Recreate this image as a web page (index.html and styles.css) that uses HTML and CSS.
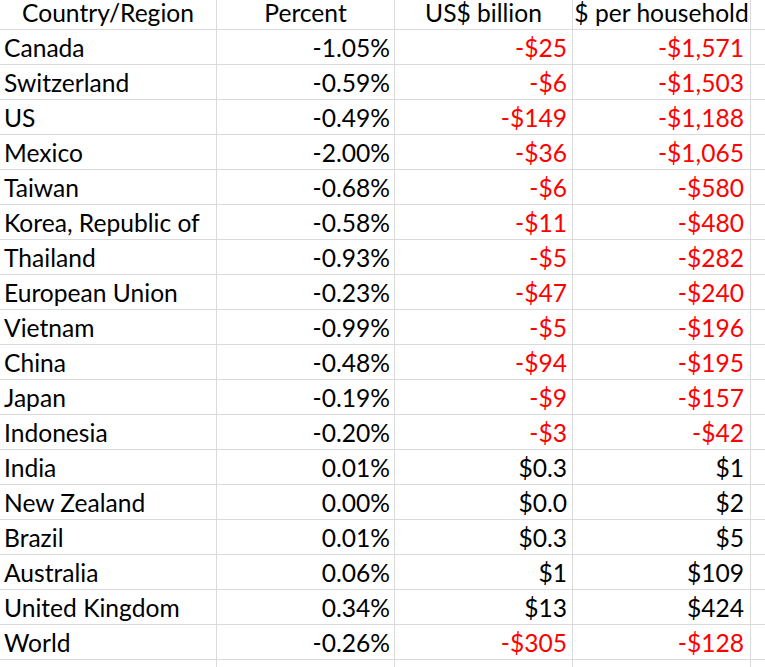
FILE: index.html
```html
<!DOCTYPE html>
<html lang="en">
<head>
<meta charset="utf-8">
<title>Tariff impact by country</title>
<link rel="stylesheet" href="styles.css">
</head>
<body>
<div class="sheet">
  <div class="cell head">Country/Region</div>
  <div class="cell head">Percent</div>
  <div class="cell head">US$ billion</div>
  <div class="cell head">$ per household</div>
  <div class="cell head"></div>

  <div class="cell name">Canada</div><div class="cell pct">-1.05%</div><div class="cell bn neg">-$25</div><div class="cell hh neg">-$1,571</div><div class="cell"></div>
  <div class="cell name">Switzerland</div><div class="cell pct">-0.59%</div><div class="cell bn neg">-$6</div><div class="cell hh neg">-$1,503</div><div class="cell"></div>
  <div class="cell name">US</div><div class="cell pct">-0.49%</div><div class="cell bn neg">-$149</div><div class="cell hh neg">-$1,188</div><div class="cell"></div>
  <div class="cell name">Mexico</div><div class="cell pct">-2.00%</div><div class="cell bn neg">-$36</div><div class="cell hh neg">-$1,065</div><div class="cell"></div>
  <div class="cell name">Taiwan</div><div class="cell pct">-0.68%</div><div class="cell bn neg">-$6</div><div class="cell hh neg">-$580</div><div class="cell"></div>
  <div class="cell name">Korea, Republic of</div><div class="cell pct">-0.58%</div><div class="cell bn neg">-$11</div><div class="cell hh neg">-$480</div><div class="cell"></div>
  <div class="cell name">Thailand</div><div class="cell pct">-0.93%</div><div class="cell bn neg">-$5</div><div class="cell hh neg">-$282</div><div class="cell"></div>
  <div class="cell name">European Union</div><div class="cell pct">-0.23%</div><div class="cell bn neg">-$47</div><div class="cell hh neg">-$240</div><div class="cell"></div>
  <div class="cell name">Vietnam</div><div class="cell pct">-0.99%</div><div class="cell bn neg">-$5</div><div class="cell hh neg">-$196</div><div class="cell"></div>
  <div class="cell name">China</div><div class="cell pct">-0.48%</div><div class="cell bn neg">-$94</div><div class="cell hh neg">-$195</div><div class="cell"></div>
  <div class="cell name">Japan</div><div class="cell pct">-0.19%</div><div class="cell bn neg">-$9</div><div class="cell hh neg">-$157</div><div class="cell"></div>
  <div class="cell name">Indonesia</div><div class="cell pct">-0.20%</div><div class="cell bn neg">-$3</div><div class="cell hh neg">-$42</div><div class="cell"></div>
  <div class="cell name">India</div><div class="cell pct">0.01%</div><div class="cell bn">$0.3</div><div class="cell hh">$1</div><div class="cell"></div>
  <div class="cell name">New Zealand</div><div class="cell pct">0.00%</div><div class="cell bn">$0.0</div><div class="cell hh">$2</div><div class="cell"></div>
  <div class="cell name">Brazil</div><div class="cell pct">0.01%</div><div class="cell bn">$0.3</div><div class="cell hh">$5</div><div class="cell"></div>
  <div class="cell name">Australia</div><div class="cell pct">0.06%</div><div class="cell bn">$1</div><div class="cell hh">$109</div><div class="cell"></div>
  <div class="cell name">United Kingdom</div><div class="cell pct">0.34%</div><div class="cell bn">$13</div><div class="cell hh">$424</div><div class="cell"></div>
  <div class="cell name">World</div><div class="cell pct">-0.26%</div><div class="cell bn neg">-$305</div><div class="cell hh neg">-$128</div><div class="cell"></div>

  <div class="cell"></div><div class="cell"></div><div class="cell"></div><div class="cell"></div><div class="cell"></div>
</div>
</body>
</html>
```

FILE: styles.css
```css
html, body {
  margin: 0;
  padding: 0;
  background: #ffffff;
}

body {
  width: 765px;
  height: 667px;
  overflow: hidden;
  font-family: "Lato", "Open Sans", sans-serif;
  font-size: 24.6px;
  color: #000000;
}

.sheet {
  display: grid;
  grid-template-columns: 216px 177px 177px 177px 15px;
  grid-template-rows: 29px;
  grid-auto-rows: 34px;
  gap: 1px;
  background: #dadada;
  width: 766px;
}

.cell {
  background: #ffffff;
  display: flex;
  align-items: flex-end;
  line-height: 28px;
  padding-bottom: 2px;
  white-space: nowrap;
  box-sizing: border-box;
}

.head {
  justify-content: center;
  line-height: 26px;
  padding-bottom: 3px;
}

.name {
  padding-left: 4px;
}

.pct {
  justify-content: flex-end;
  padding-right: 4px;
}

.bn {
  justify-content: flex-end;
  padding-right: 5px;
}

.hh {
  justify-content: flex-end;
  padding-right: 6px;
}

.neg {
  color: #ff0000;
}
```
